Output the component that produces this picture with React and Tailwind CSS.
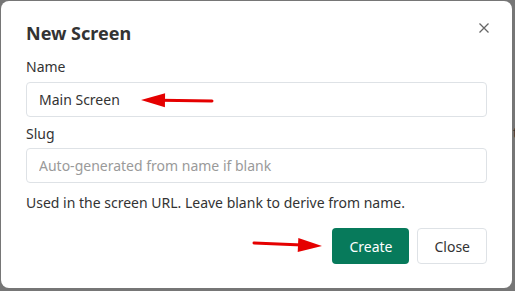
import React from "react";

function Arrow({ x1, y1, x2, y2 }) {
  // arrow pointing to (x2, y2)
  const dx = x2 - x1;
  const dy = y2 - y1;
  const len = Math.sqrt(dx * dx + dy * dy);
  const ux = dx / len;
  const uy = dy / len;
  const headLen = 24;
  const headW = 7;
  const bx = x2 - ux * headLen;
  const by = y2 - uy * headLen;
  const p1 = `${bx - uy * headW},${by + ux * headW}`;
  const p2 = `${bx + uy * headW},${by - ux * headW}`;
  return (
    <g>
      <line x1={x1} y1={y1} x2={bx + ux * 4} y2={by + uy * 4} stroke="#e50000" strokeWidth="3" strokeLinecap="round" />
      <polygon points={`${x2},${y2} ${p1} ${p2}`} fill="#e50000" />
    </g>
  );
}

export default function App() {
  return (
    <div
      className="relative w-[515px] h-[291px] bg-[#767676] pt-[1px] pl-[1px] overflow-hidden"
      style={{ fontFamily: '"Noto Sans", "Open Sans", sans-serif' }}
    >
      <span className="absolute right-[-3px] top-[122px] text-[14px] text-[#333]">t</span>
      <div className="relative w-[511px] h-[287px] bg-white rounded-[8px] px-[25px] text-[#333]">
        <div className="flex items-start justify-between pt-[19px]">
          <h2 className="text-[18px] leading-[27px] font-bold text-[#333]">New Screen</h2>
          <button className="mt-[-2px] mr-[-7px] p-1 text-[#666]">
            <svg width="12" height="12" viewBox="0 0 12 12" stroke="currentColor" strokeWidth="1.3">
              <path d="M1.5 1.5 L10.5 10.5 M10.5 1.5 L1.5 10.5" />
            </svg>
          </button>
        </div>

        <div className="mt-[9px]">
          <label className="block text-[14px] leading-[21px]">Name</label>
          <input
            className="mt-[5px] block w-full h-[35px] border border-[#dee2e6] rounded-[4px] px-[12px] text-[14px] text-[#333] outline-none"
            defaultValue="Main Screen"
          />
        </div>

        <div className="mt-[6px]">
          <label className="block text-[14px] leading-[21px]">Slug</label>
          <input
            className="mt-[4px] block w-full h-[35px] border border-[#dee2e6] rounded-[4px] px-[12px] text-[14px] text-[#333] placeholder:text-[#9a9a9a] outline-none"
            placeholder="Auto-generated from name if blank"
          />
          <p className="mt-[9px] text-[14px] leading-[21px] text-[#333]">
            Used in the screen URL. Leave blank to derive from name.
          </p>
        </div>

        <div className="flex justify-end gap-[8px] mt-[15px]">
          <button className="h-[36px] px-[17px] rounded-[4px] bg-[#077a5b] text-white text-[14px]">
            Create
          </button>
          <button className="h-[36px] px-[16px] rounded-[4px] border border-[#dee2e6] bg-white text-[#333] text-[14px]">
            Close
          </button>
        </div>
      </div>

      <svg className="absolute left-0 top-0 pointer-events-none" width="515" height="291">
        <Arrow x1={212} y1={101} x2={141} y2={100} />
        <Arrow x1={254} y1={243} x2={322} y2={246} />
      </svg>
    </div>
  );
}
